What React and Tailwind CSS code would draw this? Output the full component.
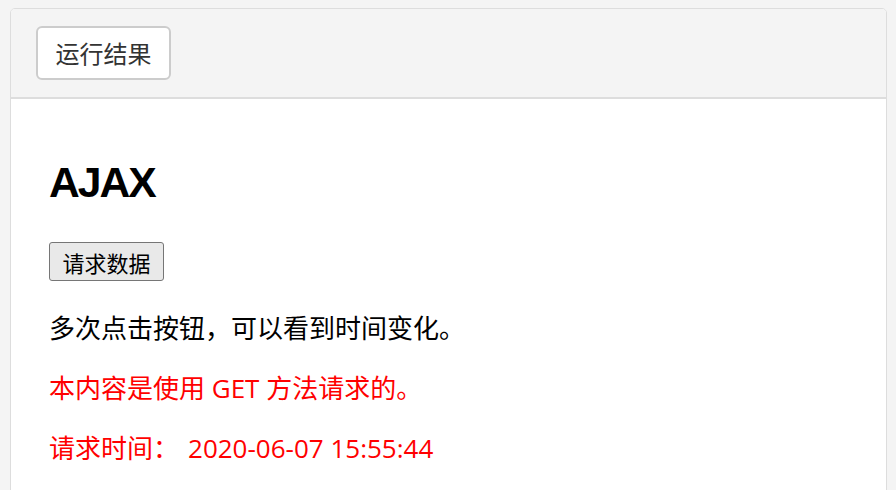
export default function App() {
  const cjk = { fontFamily: '"Noto Sans CJK SC", "Noto Sans", sans-serif' };
  const mixed = { fontFamily: '"Open Sans", "Noto Sans CJK SC", sans-serif' };
  return (
    <div className="w-[896px] h-[490px] overflow-hidden bg-[#f4f4f4] pt-[8px] pl-[10px] pr-[9px]" style={cjk}>
      <div className="border border-[#dddddd] rounded-[5px] overflow-hidden h-[600px] bg-white">
        <div className="bg-[#f4f4f4] h-[90px] border-b-2 border-[#dddddd] pl-[25px] pt-[17px]">
          <div className="w-[135px] h-[54px] bg-white border-2 border-[#cccccc] rounded-[6px] flex items-center justify-center text-[24px] leading-none text-[#333333]">
            运行结果
          </div>
        </div>
        <div className="pl-[38px] pt-[59px] text-black">
          <h1 className="text-[42.67px] font-bold leading-[49px] tracking-[-2px] m-0" style={{ fontFamily: '"Liberation Sans", Arial, sans-serif' }}>AJAX</h1>
          <div className="mt-[35px] h-[40px]">
            <button className="w-[115px] h-[39px] bg-[#e9e9e9] border border-[#767676] rounded-[3px] text-[22px] leading-none text-black flex items-center justify-center">
              请求数据
            </button>
          </div>
          <p className="mt-[29px] text-[26px] leading-[34px]" style={mixed}>多次点击按钮，可以看到时间变化。</p>
          <p className="mt-[26px] text-[26px] leading-[34px] text-[#ff0000]" style={mixed}>本内容是使用 GET 方法请求的。</p>
          <p className="mt-[26px] text-[26px] leading-[34px] text-[#ff0000]" style={mixed}>请求时间：<span className="ml-[9px]">2020-06-07 15:55:44</span></p>
        </div>
      </div>
    </div>
  );
}
